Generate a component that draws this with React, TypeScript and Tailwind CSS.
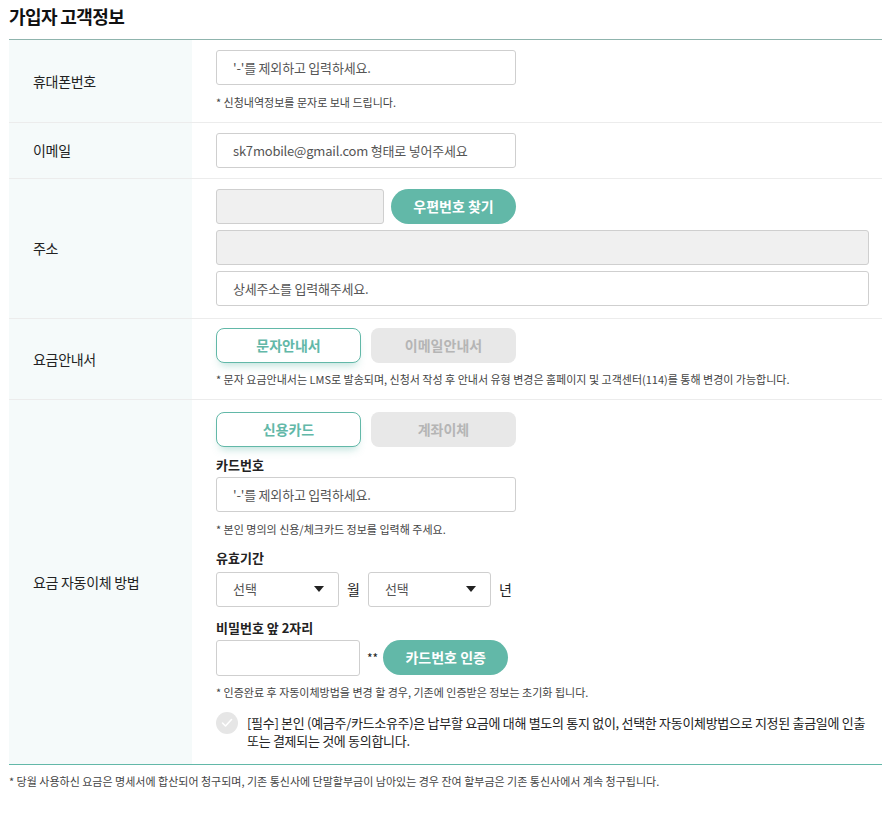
import React from "react";

const font = { fontFamily: '"Noto Sans CJK KR", "Noto Sans", sans-serif' };

function Row({ label, children, className = "" }: { label: string; children: React.ReactNode; className?: string }) {
  return (
    <div className={"flex border-b border-[#ececec] " + className}>
      <div className="w-[183px] shrink-0 bg-[#f5fafa] flex items-center pl-[24px] text-[14px] text-[#222] tracking-[-0.3px]">
        {label}
      </div>
      <div className="flex-1 pl-[24px] pr-[12px]">{children}</div>
    </div>
  );
}

function TextInput({ placeholder, className = "", disabled = false }: { placeholder?: string; className?: string; disabled?: boolean }) {
  return (
    <div
      className={
        "h-[35px] border border-[#cfcfcf] rounded-[3px] flex items-center pl-[16px] text-[13px] text-[#555] tracking-[-0.2px] " +
        (disabled ? "bg-[#f0f0f0] " : "bg-white ") +
        className
      }
    >
      {placeholder}
    </div>
  );
}

function Note({ children, className = "" }: { children: React.ReactNode; className?: string }) {
  return <div className={"text-[11px] text-[#444] tracking-[0px] " + className}>{children}</div>;
}

function TabBtns({ a, b }: { a: string; b: string }) {
  return (
    <div className="flex gap-[10px]">
      <div className="w-[145px] h-[35px] rounded-[8px] border border-[#62b8a8] bg-white flex items-center justify-center text-[14px] font-bold text-[#62b8a8] shadow-[0_6px_8px_-4px_rgba(98,184,168,0.45)]">
        {a}
      </div>
      <div className="w-[145px] h-[35px] rounded-[8px] bg-[#e8e8e8] flex items-center justify-center text-[14px] font-bold text-[#b5b5b5]">
        {b}
      </div>
    </div>
  );
}

function Select() {
  return (
    <div className="w-[123px] h-[35px] border border-[#cfcfcf] rounded-[3px] bg-white flex items-center justify-between pl-[16px] pr-[14px] text-[13px] text-[#555]">
      <span>선택</span>
      <svg width="10" height="6" viewBox="0 0 10 6">
        <path d="M0 0H10L5 6Z" fill="#222" />
      </svg>
    </div>
  );
}

export default function App() {
  return (
    <div style={font} className="w-[891px] bg-white pb-[30px]">
      <div className="px-[9px] pt-[4px]">
        <h2 className="text-[18px] font-bold text-[#111] tracking-[-0.6px] h-[35px] leading-[24px]">가입자 고객정보</h2>
        <div className="border-t border-[#8fb4ad]">
          <Row label="휴대폰번호" className="h-[83px]">
            <div className="pt-[10px]">
              <TextInput placeholder="'-'를 제외하고 입력하세요." className="w-[300px]" />
              <Note className="mt-[9px]">* 신청내역정보를 문자로 보내 드립니다.</Note>
            </div>
          </Row>
          <Row label="이메일" className="h-[56px]">
            <div className="pt-[10px]">
              <TextInput placeholder="sk7mobile@gmail.com 형태로 넣어주세요" className="w-[300px]" />
            </div>
          </Row>
          <Row label="주소" className="h-[140px]">
            <div className="pt-[10px] flex flex-col gap-[6px]">
              <div className="flex gap-[7px]">
                <TextInput disabled className="w-[168px]" />
                <div className="w-[125px] h-[35px] rounded-full bg-[#62b8a8] flex items-center justify-center text-[14px] font-bold text-white">
                  우편번호 찾기
                </div>
              </div>
              <TextInput disabled className="w-[653px]" />
              <TextInput placeholder="상세주소를 입력해주세요." className="w-[653px]" />
            </div>
          </Row>
          <Row label="요금안내서" className="h-[81px]">
            <div className="pt-[9px]">
              <TabBtns a="문자안내서" b="이메일안내서" />
              <Note className="mt-[8px]">
                * 문자 요금안내서는 LMS로 발송되며, 신청서 작성 후 안내서 유형 변경은 홈페이지 및 고객센터(114)를 통해 변경이 가능합니다.
              </Note>
            </div>
          </Row>
          <div className="flex border-b border-[#62b8a8] h-[365px]">
            <div className="w-[183px] shrink-0 bg-[#f5fafa] flex items-center pl-[24px] text-[14px] text-[#222] tracking-[-0.3px]">
              요금 자동이체 방법
            </div>
            <div className="flex-1 pl-[24px] pr-[12px] pt-[12px]">
              <TabBtns a="신용카드" b="계좌이체" />
              <div className="mt-[8px] text-[13px] font-bold text-[#222] h-[20px]">카드번호</div>
              <TextInput placeholder="'-'를 제외하고 입력하세요." className="w-[300px] mt-[2px]" />
              <Note className="mt-[9px]">* 본인 명의의 신용/체크카드 정보를 입력해 주세요.</Note>
              <div className="mt-[10px] text-[13px] font-bold text-[#222] h-[20px]">유효기간</div>
              <div className="flex items-center mt-[4px]">
                <Select />
                <span className="ml-[8px] mr-[8px] text-[14px] text-[#222]">월</span>
                <Select />
                <span className="ml-[8px] text-[14px] text-[#222]">년</span>
              </div>
              <div className="mt-[11px] text-[13px] font-bold text-[#222] h-[20px]">비밀번호 앞 2자리</div>
              <div className="flex items-center mt-[2px]">
                <div className="w-[144px] h-[36px] border border-[#cfcfcf] rounded-[3px] bg-white" />
                <span className="ml-[7px] mr-[5px] text-[12px] text-[#222]">**</span>
                <div className="w-[125px] h-[35px] rounded-full bg-[#62b8a8] flex items-center justify-center text-[14px] font-bold text-white">
                  카드번호 인증
                </div>
              </div>
              <Note className="mt-[8px]">* 인증완료 후 자동이체방법을 변경 할 경우, 기존에 인증받은 정보는 초기화 됩니다.</Note>
              <div className="flex mt-[14px]">
                <div className="w-[22px] h-[22px] rounded-full bg-[#e6e6e6] flex items-center justify-center shrink-0 mt-[-2px]">
                  <svg width="12" height="10" viewBox="0 0 12 10">
                    <path d="M1.5 5L4.5 8L10.5 1.5" stroke="white" strokeWidth="1.6" fill="none" strokeLinecap="round" strokeLinejoin="round" />
                  </svg>
                </div>
                <div className="ml-[9px] text-[13px] text-[#222] leading-[18px] tracking-[-0.3px]">
                  [필수] 본인 (예금주/카드소유주)은 납부할 요금에 대해 별도의 통지 없이, 선택한 자동이체방법으로 지정된 출금일에 인출
                  <br />
                  또는 결제되는 것에 동의합니다.
                </div>
              </div>
            </div>
          </div>
        </div>
        <Note className="mt-[8px]">
          * 당월 사용하신 요금은 명세서에 합산되어 청구되며, 기존 통신사에 단말할부금이 남아있는 경우 잔여 할부금은 기존 통신사에서 계속 청구됩니다.
        </Note>
      </div>
    </div>
  );
}
